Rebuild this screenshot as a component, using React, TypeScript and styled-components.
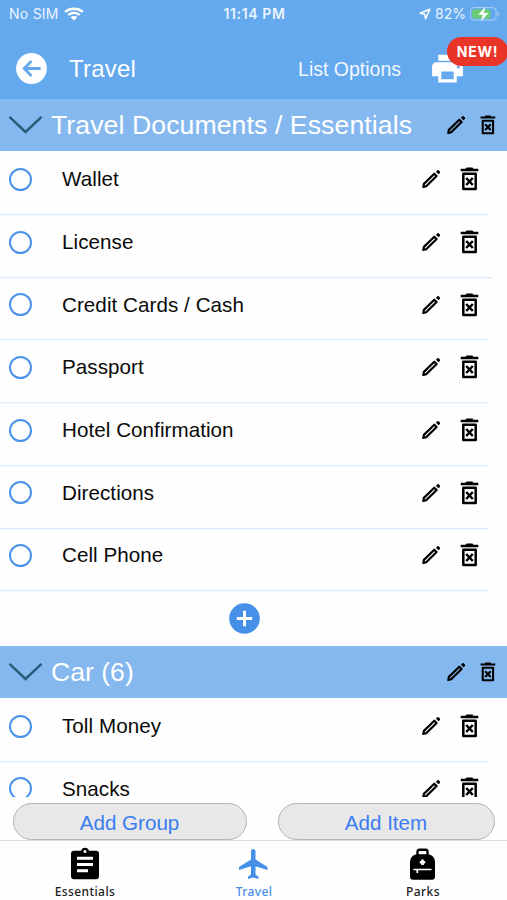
import React from 'react';
import styled, { createGlobalStyle } from 'styled-components';

const GlobalStyle = createGlobalStyle`
  * { box-sizing: border-box; }
  body { margin: 0; background: #fefefe; font-family: "Liberation Sans", Arial, sans-serif; }
  button { border: 0; padding: 0; margin: 0; background: none; font: inherit; color: inherit; }
  svg { display: block; flex: none; }
`;

const Screen = styled.div`
  width: 507px;
  height: 900px;
  display: flex;
  flex-direction: column;
  overflow: hidden;
  background: #fefefe;
`;

const StatusBar = styled.div`
  height: 28px;
  flex: none;
  display: grid;
  grid-template-columns: 1fr auto 1fr;
  align-items: center;
  padding: 0 7px 0 9px;
  background: #64a8ee;
  color: #e9f5ff;
  font: 400 14px/28px Inter, sans-serif;
`;

const StatusGroup = styled.div<{ $end?: boolean }>`
  display: flex;
  align-items: center;
  gap: ${p => (p.$end ? 4 : 5)}px;
  justify-content: ${p => (p.$end ? 'flex-end' : 'flex-start')};
  letter-spacing: ${p => (p.$end ? 0 : 0.25)}px;
`;

const Clock = styled.div`
  font-weight: 600;
  letter-spacing: 0.65px;
`;

const NavBar = styled.header`
  position: relative;
  height: 71px;
  flex: none;
  display: flex;
  align-items: center;
  padding: 10px 41px 0 16px;
  background: #64a8ee;
  color: #fff;
`;

const NavTitle = styled.h1`
  margin: 0 auto 0 22px;
  font-size: 24px;
  font-weight: 400;
  line-height: 30px;
  letter-spacing: 0.2px;
`;

const NavAction = styled.button`
  font-size: 19.5px;
  line-height: 26px;
  margin-right: 28px;
  color: #f0f8ff;
`;

const NewBadge = styled.span`
  position: absolute;
  right: -1px;
  top: 9px;
  width: 61px;
  height: 29px;
  border-radius: 15px;
  background: #e83528;
  color: #fff;
  font: 700 14px/29px Inter, sans-serif;
  letter-spacing: 0.75px;
  text-align: center;
`;

const List = styled.main`
  height: 698px;
  flex: none;
  overflow: hidden;
`;

const GroupHeader = styled.div`
  height: 52.4px;
  display: flex;
  align-items: center;
  padding: 0 11px 0 8px;
  background: #85b8ee;
`;

const GroupTitle = styled.h2<{ $spacing: number }>`
  margin: 0 auto 0 8px;
  font-size: 26.6px;
  line-height: 34px;
  font-weight: 400;
  color: #fff;
  white-space: nowrap;
  letter-spacing: ${p => p.$spacing}px;
`;

const GroupActions = styled.div`
  display: flex;
  align-items: center;
  gap: 14px;
`;

const ItemRow = styled.div<{ $inset: number }>`
  height: 62.7px;
  margin-right: ${p => p.$inset}px;
  padding: 0 ${p => 28 - p.$inset}px 6.8px 9px;
  display: flex;
  align-items: center;
  box-shadow: 0 1px 0 #dceaf9, 0 2px 0 #f2f8fd;
`;

const Check = styled.span`
  width: 23px;
  height: 23px;
  border: 2.5px solid #4a92ea;
  border-radius: 50%;
  flex: none;
`;

const ItemName = styled.span`
  margin: 0 auto 0 30px;
  font-size: 20.6px;
  line-height: 28px;
  letter-spacing: 0.06px;
  color: #0a0a0a;
`;

const ItemActions = styled.div`
  display: flex;
  align-items: center;
  gap: 19px;
`;

const AddRow = styled.div`
  height: 55.5px;
  display: flex;
  align-items: center;
  justify-content: center;
  padding: 1px 18px 0 0;
`;

const BottomActions = styled.div`
  height: 43px;
  flex: none;
  display: flex;
  justify-content: space-between;
  align-items: flex-end;
  padding: 0 12px 0 13px;
`;

const PillButton = styled.button<{ $width: number }>`
  && {
    width: ${p => p.$width}px;
    height: 37px;
    border: 1.5px solid #b3b3b3;
    border-radius: 19px;
    background: #e8e8e8;
    color: #397df0;
    font-size: 20.6px;
    line-height: 35px;
    padding-right: 1px;
    padding-top: 1px;
  }
`;

const TabBar = styled.nav`
  flex: 1;
  display: grid;
  grid-template-columns: repeat(3, 169px);
  border-top: 1px solid #dedede;
`;

const Tab = styled.div<{ $active?: boolean }>`
  display: flex;
  flex-direction: column;
  align-items: center;
  padding-top: 5px;
  color: ${p => (p.$active ? '#458fe8' : '#1c1c1c')};
`;

const TabLabel = styled.span`
  margin-top: 1px;
  font: 500 12px/17px "Noto Sans", sans-serif;
  letter-spacing: 0.4px;
  padding-left: 1px;
`;

const Wifi = () => (
  <svg width="20" height="14" viewBox="0 0 18 14" preserveAspectRatio="none" fill="none" stroke="#fff">
    <path d="M1 4.8C5.6.7 12.4.7 17 4.8M3.8 8C7 5.2 11 5.2 14.2 8" strokeWidth="2.3" />
    <path d="M5.9 10.2Q9 7.7 12.1 10.2L9 13.5Z" fill="#fff" stroke="none" />
  </svg>
);

const LocationArrow = () => (
  <svg width="12" height="12" viewBox="0 0 12 12" fill="none" stroke="#fff" strokeWidth="1.6" strokeLinejoin="round">
    <path d="M10.8 1.2 1.2 5.2l4.6 1.1.8 4.5z" />
  </svg>
);

const Battery = () => (
  <svg width="30" height="16" viewBox="0 0 30 16">
    <rect x=".6" y="1.6" width="25.5" height="12.5" rx="3.5" fill="none" stroke="#a9d2f5" />
    <rect x="2.2" y="3.2" width="18.3" height="9.4" rx="2" fill="#69cd78" />
    <path d="M27.6 5.5v4.8q1.5-.5 1.5-2.4t-1.5-2.4" fill="#a9d2f5" />
    <path d="M15.4.8 8.2 8.7h4.5L11 15.3l7.5-8.4h-4.6z" fill="#fff" />
  </svg>
);

const BackCircle = () => (
  <svg width="31" height="31" viewBox="0 0 31 31">
    <circle cx="15.5" cy="15.5" r="15.4" fill="#fff" />
    <path d="M15.5 8 8.2 15.5l7.3 7.5M8.6 15.5h16" fill="none" stroke="#64a8ee" strokeWidth="2.8" />
  </svg>
);

const Printer = () => (
  <svg width="37" height="37" viewBox="0 0 24 24" fill="#fff">
    <path d="M19 8H5c-1.66 0-3 1.34-3 3v6h4v4h12v-4h4v-6c0-1.66-1.34-3-3-3zm-3 11H8v-5h8v5zm3-7c-.55 0-1-.45-1-1s.45-1 1-1 1 .45 1 1-.45 1-1 1zm-1-9H6v4h12V3z" />
  </svg>
);

const Chevron = () => (
  <svg width="35" height="20" viewBox="0 0 35 20" fill="none" stroke="#235f7c" strokeWidth="2.5">
    <path d="M1.5 1.8 17.5 17 33.5 1.8" />
  </svg>
);

const Pencil = () => (
  <svg width="20" height="20" viewBox="0 0 20 20">
    <path d="M2.300 18 2.900 14.900 13.300 4.700 15.600 7 5.200 17.300Z" fill="none" stroke="#000" strokeWidth="2.2" strokeLinejoin="round" />
    <path d="m14.900 2.700 1.400-1.400q.7-.6 1.400 0l1.200 1.200q.6.7 0 1.400l-1.400 1.400z" />
  </svg>
);

const Trash = ({ size = 24 }: { size?: number }) => (
  <svg width={(size * 19) / 24} height={size} viewBox="0 0 19 24">
    <path d="M.7 1.8h4.800L6.600.5h5.800l1.100 1.300h4.800v2.500H.7z" />
    <path d="M3.300 6.800h12.400v15.200H3.300z" fill="none" stroke="#000" strokeWidth="2.500" strokeLinejoin="round" />
    <path d="m6.200 11 6.600 7m0-7-6.600 7" fill="none" stroke="#000" strokeWidth="2.500" />
  </svg>
);

const PlusCircle = () => (
  <svg width="31" height="31" viewBox="0 0 31 31">
    <circle cx="15.5" cy="15.5" r="15.3" fill="#4790e9" />
    <path d="M15.5 7.8v15.4M7.8 15.5h15.4" stroke="#fff" strokeWidth="3" />
  </svg>
);

const Clipboard = () => (
  <svg width="36" height="36" viewBox="0 0 36 36">
    <path d="M7 4.7h7a4.2 4.2 0 0 1 8 0h7q3 0 3 3v22.5q0 3-3 3H7q-3 0-3-3V7.7q0-3 3-3z" />
    <circle cx="18" cy="5.6" r="1.5" fill="#fff" />
    <path d="M10 12.3h16M10 18.5h16M10 24.8h11" stroke="#fff" strokeWidth="3" />
  </svg>
);

const Airplane = () => (
  <svg width="36" height="36" viewBox="0 0 24 24" fill="currentColor">
    <path d="M21 16v-2l-8-5V3.5c0-.83-.67-1.5-1.5-1.5S10 2.67 10 3.5V9l-8 5v2l8-2.5V19l-2 1.5V22l3.5-1 3.5 1v-1.5L13 19v-5.5l8 2.5z" />
  </svg>
);

const Backpack = () => (
  <svg width="36" height="36" viewBox="0 0 36 36">
    <path d="M12.5 9V5.700q0-1.900 2-1.900h6q2 0 2 1.900V9" fill="none" stroke="#000" strokeWidth="2.4" />
    <path d="M11 8.300h13q6 2 6 7.700v14.700q0 3-3 3H8q-3 0-3-3V16q0-5.700 6-7.700z" />
    <path d="M17.500 13.600v5.400M14.800 16.300h5.400" stroke="#fff" strokeWidth="2.600" />
    <path d="M8.500 23.500h18M12.300 23.500v3.500" stroke="#fff" strokeWidth="1.700" fill="none" />
  </svg>
);

const Item = ({ name, inset = 19 }: { name: string; inset?: number }) => (
  <ItemRow $inset={inset}>
    <Check />
    <ItemName>{name}</ItemName>
    <ItemActions><Pencil /><Trash /></ItemActions>
  </ItemRow>
);

const Group = ({ title, spacing = 0 }: { title: string; spacing?: number }) => (
  <GroupHeader>
    <Chevron />
    <GroupTitle $spacing={spacing}>{title}</GroupTitle>
    <GroupActions><Pencil /><Trash size={20} /></GroupActions>
  </GroupHeader>
);

const travelItems = ['Wallet', 'License', 'Credit Cards / Cash', 'Passport', 'Hotel Confirmation', 'Directions', 'Cell Phone'];

export default function App() {
  return (
    <>
      <GlobalStyle />
      <Screen>
        <StatusBar>
          <StatusGroup>No SIM<Wifi /></StatusGroup>
          <Clock>11:14 PM</Clock>
          <StatusGroup $end><LocationArrow />82%<Battery /></StatusGroup>
        </StatusBar>
        <NavBar>
          <BackCircle />
          <NavTitle>Travel</NavTitle>
          <NavAction>List Options</NavAction>
          <Printer />
          <NewBadge>NEW!</NewBadge>
        </NavBar>
        <List>
          <Group title="Travel Documents / Essentials" spacing={0.1} />
          {travelItems.map((name, i) => <Item key={name} name={name} inset={i === 1 ? 15 : 19} />)}
          <AddRow><PlusCircle /></AddRow>
          <Group title="Car (6)" />
          <Item name="Toll Money" />
          <Item name="Snacks" />
        </List>
        <BottomActions>
          <PillButton $width={234}>Add Group</PillButton>
          <PillButton $width={217}>Add Item</PillButton>
        </BottomActions>
        <TabBar>
          <Tab><Clipboard /><TabLabel>Essentials</TabLabel></Tab>
          <Tab $active><Airplane /><TabLabel>Travel</TabLabel></Tab>
          <Tab><Backpack /><TabLabel>Parks</TabLabel></Tab>
        </TabBar>
      </Screen>
    </>
  );
}
